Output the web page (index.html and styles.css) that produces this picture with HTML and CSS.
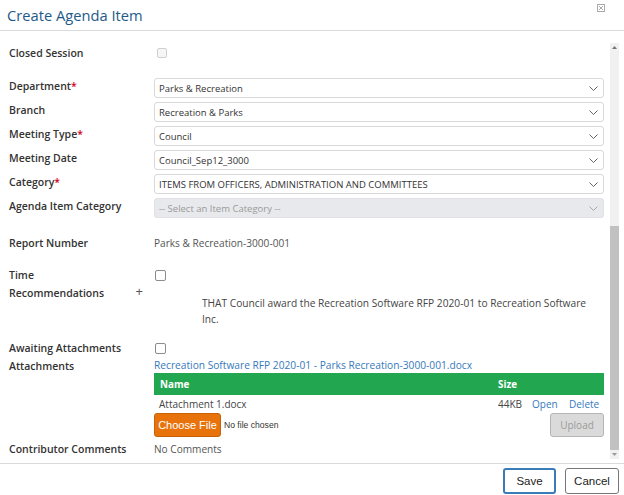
FILE: index.html
```html
<!DOCTYPE html>
<html>
<head>
    <title>Create Agenda Item</title>
    <link rel="stylesheet" href="styles.css">
</head>
<body>
    <div class="dialog">
        <div class="dialog-header">
            <h1>Create Agenda Item</h1>
            <span class="close-icon">
                <svg width="8" height="8" viewBox="0 0 8 8">
                    <rect x="0.5" y="0.5" width="7" height="7" fill="none" stroke="#aaa" stroke-width="1"/>
                    <path d="M2 2 L6 6 M6 2 L2 6" stroke="#aaa" stroke-width="1"/>
                </svg>
            </span>
        </div>

        <div class="dialog-body">
            <div class="form">
                <div class="row row-check">
                    <label>Closed Session</label>
                    <span class="checkbox disabled"></span>
                </div>

                <div class="row row-select first">
                    <label>Department<span class="req">*</span></label>
                    <div class="select"><span>Parks &amp; Recreation</span><svg class="chevron" width="9" height="5" viewBox="0 0 9 5"><path d="M0.5 0.5 L4.5 4.5 L8.5 0.5" fill="none" stroke="#666" stroke-width="1"/></svg></div>
                </div>
                <div class="row row-select">
                    <label>Branch</label>
                    <div class="select"><span>Recreation &amp; Parks</span><svg class="chevron" width="9" height="5" viewBox="0 0 9 5"><path d="M0.5 0.5 L4.5 4.5 L8.5 0.5" fill="none" stroke="#666" stroke-width="1"/></svg></div>
                </div>
                <div class="row row-select">
                    <label>Meeting Type<span class="req">*</span></label>
                    <div class="select"><span>Council</span><svg class="chevron" width="9" height="5" viewBox="0 0 9 5"><path d="M0.5 0.5 L4.5 4.5 L8.5 0.5" fill="none" stroke="#666" stroke-width="1"/></svg></div>
                </div>
                <div class="row row-select">
                    <label>Meeting Date</label>
                    <div class="select"><span>Council_Sep12_3000</span><svg class="chevron" width="9" height="5" viewBox="0 0 9 5"><path d="M0.5 0.5 L4.5 4.5 L8.5 0.5" fill="none" stroke="#666" stroke-width="1"/></svg></div>
                </div>
                <div class="row row-select">
                    <label>Category<span class="req">*</span></label>
                    <div class="select"><span>ITEMS FROM OFFICERS, ADMINISTRATION AND COMMITTEES</span><svg class="chevron" width="9" height="5" viewBox="0 0 9 5"><path d="M0.5 0.5 L4.5 4.5 L8.5 0.5" fill="none" stroke="#666" stroke-width="1"/></svg></div>
                </div>
                <div class="row row-select">
                    <label>Agenda Item Category</label>
                    <div class="select disabled"><span>-- Select an Item Category --</span><svg class="chevron" width="9" height="5" viewBox="0 0 9 5"><path d="M0.5 0.5 L4.5 4.5 L8.5 0.5" fill="none" stroke="#aaa" stroke-width="1"/></svg></div>
                </div>

                <div class="row row-report">
                    <label>Report Number</label>
                    <div class="value">Parks &amp; Recreation-3000-001</div>
                </div>

                <div class="row row-check row-time">
                    <label>Time</label>
                    <span class="checkbox"></span>
                </div>

                <div class="row row-recs">
                    <label class="label-add">Recommendations <span class="plus">+</span></label>
                    <div class="recs-text">THAT Council award the Recreation Software RFP 2020-01 to Recreation Software Inc.</div>
                </div>

                <div class="row row-check row-awaiting">
                    <label>Awaiting Attachments</label>
                    <span class="checkbox"></span>
                </div>

                <div class="row row-attach">
                    <label>Attachments</label>
                    <div class="attach">
                        <a class="link doc-link" href="#">Recreation Software RFP 2020-01 - Parks Recreation-3000-001.docx</a>
                        <div class="attach-table">
                            <div class="attach-head">
                                <span>Name</span>
                                <span class="size-head">Size</span>
                            </div>
                            <div class="attach-row">
                                <span>Attachment 1.docx</span>
                                <span>44KB</span>
                                <a class="link" href="#">Open</a>
                                <a class="link" href="#">Delete</a>
                            </div>
                        </div>
                        <div class="upload-row">
                            <button type="button" class="btn-choose">Choose File</button>
                            <span class="no-file">No file chosen</span>
                            <button type="button" class="btn-upload" disabled>Upload</button>
                        </div>
                    </div>
                </div>

                <div class="row row-comments">
                    <label>Contributor Comments</label>
                    <div class="value">No Comments</div>
                </div>
            </div>

            <div class="scrollbar">
                <div class="sb-arrow"><svg width="5" height="3" viewBox="0 0 5 3"><path d="M0 3 L2.5 0 L5 3 Z" fill="#777"/></svg></div>
                <div class="sb-track"></div>
                <div class="sb-thumb"></div>
                <div class="sb-arrow"><svg width="5" height="3" viewBox="0 0 5 3"><path d="M0 0 L2.5 3 L5 0 Z" fill="#999"/></svg></div>
            </div>
        </div>

        <div class="dialog-footer">
            <button type="button" class="btn btn-save">Save</button>
            <button type="button" class="btn">Cancel</button>
        </div>
    </div>
</body>
</html>
```

FILE: styles.css
```css
/* Dialog layout */
body {
    font-family: 'Open Sans', 'Liberation Sans', sans-serif;
    background-color: #ffffff;
    margin: 0;
    padding: 0;
    color: #333333;
}

.dialog {
    width: 624px;
    height: 495px;
    display: flex;
    flex-direction: column;
    overflow: hidden;
}

.dialog-header {
    height: 30px;
    flex-shrink: 0;
    border-bottom: 1px solid #dadada;
    display: flex;
    justify-content: space-between;
    align-items: center;
    padding: 0 19px 0 7px;
}

h1 {
    margin: 0;
    font-size: 14.7px;
    font-weight: 400;
    color: #1e5a87;
}

.close-icon {
    align-self: flex-start;
    margin-top: 4px;
    line-height: 0;
}

.dialog-body {
    flex: 1;
    display: flex;
    min-height: 0;
}

.form {
    flex: 1;
    padding: 14px 6px 0 9px;
    overflow: hidden;
}

/* Rows */
.row {
    display: grid;
    grid-template-columns: 145px 1fr;
    align-items: start;
}

label {
    font-size: 10.5px;
    font-weight: 600;
    line-height: 16px;
    color: #333333;
}

.req {
    color: #d0021b;
}

.row-check {
    align-items: center;
    height: 16px;
}

.checkbox {
    width: 9px;
    height: 9px;
    border: 1px solid #8c8c8c;
    border-radius: 2px;
    margin-left: 1px;
    background-color: #ffffff;
}

.checkbox.disabled {
    border-color: #d0d0d0;
    background-color: #f6f6f6;
    margin-left: 3px;
    width: 8px;
    height: 8px;
}

.row-select {
    margin-top: 4px;
}

.row-select.first {
    margin-top: 17px;
}

.select {
    height: 20px;
    box-sizing: border-box;
    border: 1px solid #d9d9d9;
    border-radius: 3px;
    background-color: #ffffff;
    display: flex;
    align-items: center;
    justify-content: space-between;
    padding: 0 5px 0 4px;
    font-size: 9.5px;
    color: #333333;
}

.select.disabled {
    background-color: #e8e9ec;
    border-color: #e0e1e4;
    color: #9a9a9a;
}

.value {
    font-size: 10.1px;
    line-height: 16px;
    color: #555555;
}

.row-report {
    margin-top: 17px;
}

.row-time {
    margin-top: 16px;
}

.row-recs {
    margin-top: 2px;
}

.label-add {
    display: flex;
    justify-content: space-between;
    padding-right: 11px;
}

.plus {
    font-weight: 400;
    font-size: 13px;
    color: #555555;
    margin-top: -2px;
}

.recs-text {
    margin-top: 10px;
    padding-left: 48px;
    padding-right: 14px;
    font-size: 10.2px;
    line-height: 16px;
    color: #444444;
}

.row-awaiting {
    margin-top: 13px;
}

.row-attach {
    margin-top: 2px;
}

.link {
    color: #3679bd;
    text-decoration: none;
}

.doc-link {
    display: block;
    font-size: 10.2px;
    line-height: 15px;
}

/* Attachment table */
.attach-head {
    height: 22px;
    background-color: #22a64f;
    color: #ffffff;
    font-weight: 700;
    font-size: 9.8px;
    display: grid;
    grid-template-columns: 1fr 106px;
    align-items: center;
    padding-left: 6px;
}

.attach-row {
    height: 18px;
    display: grid;
    grid-template-columns: 1fr 34px 37px 35px;
    align-items: center;
    padding-left: 5px;
    font-size: 10px;
    color: #444444;
}

.upload-row {
    height: 24px;
    display: flex;
    align-items: center;
}

.btn-choose {
    height: 24px;
    width: 67px;
    padding: 0;
    font-family: 'Liberation Sans', Arial, sans-serif;
    font-size: 11px;
    color: #ffffff;
    background-color: #e8730c;
    border: 1px solid #c86205;
    border-radius: 3px;
}

.no-file {
    font-family: 'Liberation Sans', Arial, sans-serif;
    font-size: 8.6px;
    color: #333333;
    margin-left: 3px;
    flex: 1;
}

.btn-upload {
    height: 24px;
    width: 54px;
    padding: 0;
    font-family: 'Open Sans', sans-serif;
    font-size: 10px;
    color: #9a9a9a;
    background-color: #dadada;
    border: 1px solid #b5b5b5;
    border-radius: 3px;
}

.row-comments {
    margin-top: 4px;
}

/* Fake scrollbar */
.scrollbar {
    width: 9px;
    margin: 12px 5px 4px 0;
    background-color: #f1f1f1;
    display: flex;
    flex-direction: column;
}

.sb-arrow {
    height: 9px;
    display: flex;
    align-items: center;
    justify-content: center;
    flex-shrink: 0;
}

.sb-track {
    flex: 1;
}

.sb-thumb {
    height: 224px;
    background-color: #c1c1c1;
}

/* Footer */
.dialog-footer {
    height: 32px;
    flex-shrink: 0;
    border-top: 1px solid #dadada;
    display: flex;
    justify-content: flex-end;
    align-items: flex-start;
    gap: 9px;
    padding: 4px 5px 0 0;
    box-sizing: border-box;
}

.btn {
    height: 26px;
    width: 54px;
    padding: 0;
    font-family: 'Liberation Sans', Arial, sans-serif;
    font-size: 11.5px;
    color: #222222;
    background-color: #ffffff;
    border: 1px solid #767676;
    border-radius: 3px;
}

.btn-save {
    width: 53px;
    border: 2px solid #3b7bb8;
}
```
